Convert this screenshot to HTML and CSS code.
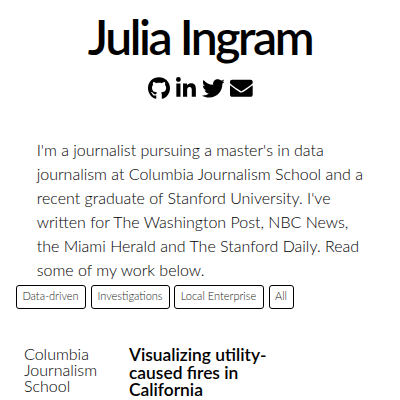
FILE: index.html
```html
<!DOCTYPE html>
<html lang="en">
<head>
<meta charset="utf-8">
<title>Julia Ingram</title>
<link rel="stylesheet" href="styles.css">
</head>
<body>
<header>
<h1>Julia Ingram</h1>
<nav class="social">
<svg class="github" viewBox="0 0 496 512"><path d="M165.9 397.4c0 2-2.3 3.6-5.2 3.6-3.3.3-5.6-1.3-5.6-3.6 0-2 2.3-3.6 5.2-3.6 3-.3 5.6 1.3 5.6 3.6zM244.800 8C106.100 8 0 113.300 0 252c0 110.900 69.800 205.800 169.500 239.200 12.800 2.300 17.300-5.600 17.300-12.100 0-6.200-.3-40.400-.3-61.400 0 0-70 15-84.700-29.800 0 0-11.400-29.100-27.800-36.600 0 0-22.900-15.700 1.600-15.400 0 0 24.900 2 38.600 25.800 21.900 38.600 58.600 27.500 72.900 20.900 2.300-16 8.800-27.100 16-33.700-55.900-6.200-112.300-14.300-112.300-110.500 0-27.500 7.600-41.300 23.600-58.900-2.600-6.500-11.100-33.300 2.600-67.900 20.900-6.500 69 27 69 27 20-5.600 41.500-8.500 62.800-8.500s42.800 2.900 62.800 8.500c0 0 48.100-33.600 69-27 13.700 34.700 5.200 61.400 2.600 67.900 16 17.700 25.800 31.500 25.800 58.900 0 96.500-58.900 104.200-114.800 110.500 9.200 7.900 17 22.900 17 46.400 0 33.700-.3 75.400-.3 83.600 0 6.500 4.600 14.400 17.300 12.100C428.200 457.800 496 362.900 496 252 496 113.300 383.500 8 244.800 8z"/></svg>
<svg class="linkedin" viewBox="0 0 448 512"><path d="M100.280 448H7.400V148.900h92.880zM53.790 108.100C24.090 108.100 0 83.500 0 53.800a53.790 53.790 0 0 1 107.580 0c0 29.700-24.100 54.300-53.790 54.300zM447.900 448h-92.680V302.400c0-34.700-.7-79.200-48.290-79.200-48.290 0-55.690 37.700-55.690 76.700V448h-92.780V148.900h89.080v40.800h1.300c12.400-23.500 42.690-48.300 87.880-48.300 94 0 111.280 61.900 111.280 142.300V448z"/></svg>
<svg class="twitter" viewBox="0 0 512 512"><path d="M459.370 151.716c.325 4.548.325 9.097.325 13.645 0 138.720-105.583 298.558-298.558 298.558-59.452 0-114.680-17.219-161.137-47.106 8.447.974 16.568 1.299 25.340 1.299 49.055 0 94.213-16.568 130.274-44.832-46.132-.975-84.792-31.188-98.112-72.772 6.498.974 12.995 1.624 19.818 1.624 9.421 0 18.843-1.300 27.614-3.573-48.081-9.747-84.143-51.980-84.143-102.985v-1.299c13.969 7.797 30.214 12.670 47.431 13.319-28.264-18.843-46.781-51.005-46.781-87.391 0-19.492 5.197-37.360 14.294-52.954 51.655 63.675 129.300 105.258 216.365 109.807-1.624-7.797-2.599-15.918-2.599-24.040 0-57.828 46.782-104.934 104.934-104.934 30.213 0 57.502 12.670 76.670 33.137 23.715-4.548 46.456-13.320 66.599-25.340-7.798 24.366-24.366 44.833-46.132 57.827 21.117-2.273 41.584-8.122 60.426-16.243-14.292 20.791-32.161 39.308-52.628 54.253z"/></svg>
<svg class="mail" viewBox="0 0 512 512"><path d="M502.300 190.800c3.900-3.100 9.700-.2 9.700 4.700V400c0 26.500-21.500 48-48 48H48c-26.500 0-48-21.500-48-48V195.600c0-5 5.700-7.800 9.700-4.700 22.400 17.400 52.100 39.500 154.100 113.600 21.100 15.400 56.700 47.800 92.200 47.600 35.700.3 72-32.800 92.300-47.600 102-74.100 131.600-96.300 154-113.700zM256 320c23.200.4 56.600-29.200 73.400-41.400 132.700-96.300 142.800-104.700 173.400-128.700 5.800-4.500 9.200-11.500 9.200-18.900v-19c0-26.500-21.500-48-48-48H48c-26.500 0-48 21.500-48 48v19c0 7.400 3.400 14.300 9.200 18.900 30.600 23.900 40.700 32.400 173.400 128.700 16.800 12.200 50.200 41.800 73.400 41.400z"/></svg>
</nav>
</header>
<p class="intro">I'm a journalist pursuing a master's in data journalism at Columbia Journalism School and a recent graduate of Stanford University. I've written for The Washington Post, NBC News, the Miami Herald and The Stanford Daily. Read some of my work below.</p>
<div class="filters"><button class="data">Data-driven</button><button class="inv">Investigations</button><button class="local">Local Enterprise</button><button class="all">All</button></div>
<article><div class="source">Columbia Journalism School</div><h2>Visualizing utility-caused fires in California</h2></article>
</body>
</html>
```
FILE: styles.css
```css
* { box-sizing: border-box; }
body { margin: 0; height: 400px; overflow: hidden; background: #fff; color: #000; font-family: Lato, sans-serif; font-weight: 300; }
header { height: 138px; padding-top: 7px; text-align: center; }
h1 { margin: 0; font-size: 48px; line-height: 60px; font-weight: 600; letter-spacing: -2.4px; }
.social { display: flex; justify-content: center; gap: 6px; padding: 10px 0 0 1px; }
.social svg { height: 22.7px; fill: #000; }
.github { width: 22px; }
.twitter, .mail { width: 22.7px; }
.linkedin { width: 19.9px; }
.intro { margin: 0 36px 0 36.7px; font-size: 16px; line-height: 24px; }
.filters { display: flex; gap: 5px; margin: 3px 16px 0; }
button { height: 24px; padding: 0 1px 2px 0; border: 1px solid #000; border-radius: 3px; background: #fff; color: #222; font: 300 11px/20px Lato, sans-serif; }
.data { width: 70px; }
.inv { width: 79px; }
.local { width: 90px; margin-left: -1px; }
.all { width: 25px; }
article { display: grid; grid-template-columns: 105px 150px; margin: 37px 24px 0; }
.source { font-size: 16px; line-height: 16px; }
h2 { margin: 0; font-size: 17.4px; line-height: 17.5px; font-weight: 600; }
```
